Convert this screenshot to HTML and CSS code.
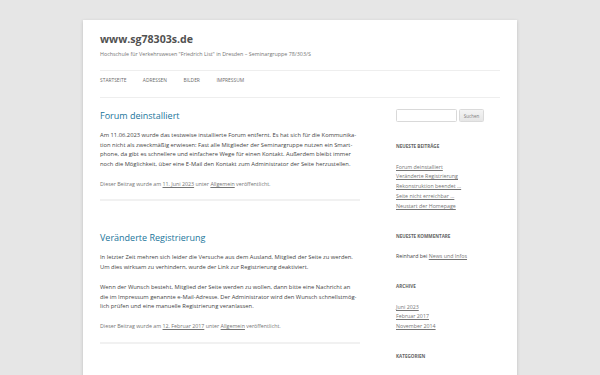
FILE: index.html
```html
<!DOCTYPE html>
<html lang="de">
<head>
<meta charset="utf-8">
<title>www.sg78303s.de</title>
<link rel="stylesheet" href="styles.css">
</head>
<body>
<div class="site">
  <header class="site-header">
    <h1 class="site-title"><a href="#">www.sg78303s.de</a></h1>
    <h2 class="site-description">Hochschule für Verkehrswesen "Friedrich List" in Dresden – Seminargruppe 78/303/S</h2>
    <nav class="main-nav">
      <ul class="nav-menu">
        <li><a href="#">Startseite</a></li>
        <li><a href="#">Adressen</a></li>
        <li><a href="#">Bilder</a></li>
        <li><a href="#">Impressum</a></li>
      </ul>
    </nav>
  </header>
  <div class="main">
    <div class="content">
      <article class="post">
        <h1 class="entry-title"><a href="#">Forum deinstalliert</a></h1>
        <div class="entry-content">
          <p>Am 11.06.2023 wurde das testweise installierte Forum entfernt. Es hat sich für die Kommunika&shy;tion nicht als zweckmäßig erwiesen: Fast alle Mitglieder der Seminargruppe nutzen ein Smart&shy;phone, da gibt es schnellere und einfachere Wege für einen Kontakt. Außerdem bleibt immer noch die Möglichkeit, über eine E-Mail den Kontakt zum Administrator der Seite herzustellen.</p>
        </div>
        <footer class="entry-meta">Dieser Beitrag wurde am <a href="#">11. Juni 2023</a> unter <a href="#">Allgemein</a> veröffentlicht.</footer>
      </article>
      <article class="post">
        <h1 class="entry-title"><a href="#">Veränderte Registrierung</a></h1>
        <div class="entry-content">
          <p>In letzter Zeit mehren sich leider die Versuche aus dem Ausland, Mitglied der Seite zu werden. Um dies wirksam zu verhindern, wurde der Link zur Registrierung deaktiviert.</p>
          <p>Wenn der Wunsch besteht, Mitglied der Seite werden zu wollen, dann bitte eine Nachricht an die im Impressum genannte e-Mail-Adresse. Der Administrator wird den Wunsch schnellstmög&shy;lich prüfen und eine manuelle Registrierung veranlassen.</p>
        </div>
        <footer class="entry-meta">Dieser Beitrag wurde am <a href="#">12. Februar 2017</a> unter <a href="#">Allgemein</a> veröffentlicht.</footer>
      </article>
    </div>
    <aside class="sidebar">
      <div class="widget widget-search">
        <form class="search-form">
          <input class="search-input" type="text" aria-label="Suche">
          <button class="search-button" type="button">Suchen</button>
        </form>
      </div>
      <div class="widget">
        <h3 class="widget-title">Neueste Beiträge</h3>
        <ul class="widget-list">
          <li><a href="#">Forum deinstalliert</a></li>
          <li><a href="#">Veränderte Registrierung</a></li>
          <li><a href="#">Rekonstruktion beendet …</a></li>
          <li><a href="#">Seite nicht erreichbar …</a></li>
          <li><a href="#">Neustart der Homepage</a></li>
        </ul>
      </div>
      <div class="widget">
        <h3 class="widget-title">Neueste Kommentare</h3>
        <ul class="widget-list">
          <li>Reinhard bei <a href="#">News und Infos</a></li>
        </ul>
      </div>
      <div class="widget">
        <h3 class="widget-title">Archive</h3>
        <ul class="widget-list">
          <li><a href="#">Juni 2023</a></li>
          <li><a href="#">Februar 2017</a></li>
          <li><a href="#">November 2014</a></li>
        </ul>
      </div>
      <div class="widget">
        <h3 class="widget-title">Kategorien</h3>
      </div>
    </aside>
  </div>
</div>
</body>
</html>
```
FILE: styles.css
```css
* { box-sizing: border-box; }
html, body { margin: 0; padding: 0; }
body {
  background: #e6e6e6;
  font-family: "Open Sans", "DejaVu Sans", sans-serif;
  color: #444;
}
.site {
  width: 434px;
  margin: 20px auto 0;
  padding: 0 17px 60px;
  background: #fff;
  box-shadow: 0 1px 3px rgba(100, 100, 100, 0.3);
}
.site-header { padding-top: 10px; }
.site-title {
  margin: 0;
  font-size: 10.6px;
  line-height: 19.6px;
  font-weight: 700;
}
.site-title a { color: #515151; text-decoration: none; }
.site-description {
  margin: 0;
  font-size: 5.35px;
  line-height: 9.8px;
  font-weight: 400;
  color: #757575;
}
.main-nav { margin-top: 10.5px; }
.nav-menu {
  list-style: none;
  margin: 0;
  padding: 0 0 7px;
  display: flex;
  gap: 16.5px;
  border-top: 1px solid #eeeeee;
  border-bottom: 1px solid #eeeeee;
}
.nav-menu a {
  display: block;
  font-size: 4.9px;
  line-height: 19px;
  text-transform: uppercase;
  color: #6a6a6a;
  text-decoration: none;
}
.main {
  display: flex;
  justify-content: space-between;
  align-items: flex-start;
  margin-top: 13px;
}
.content { width: 260px; }
.post {
  padding-bottom: 9.8px;
  border-bottom: 2px solid #f1f1f1;
  margin-bottom: 32px;
}
.entry-title {
  margin: 0 0 10.2px;
  font-size: 9px;
  line-height: 9.8px;
  font-weight: 400;
}
.entry-title a { color: #21759b; text-decoration: none; }
.entry-content { max-width: 258px; }
.entry-content p {
  margin: 0 0 9.8px;
  font-size: 5.8px;
  line-height: 9.8px;
  hyphens: manual;
}
.entry-meta {
  font-size: 5.3px;
  line-height: 9.8px;
  color: #757575;
}
.entry-meta a { color: #757575; }
.sidebar { width: 104px; }
.widget { margin-bottom: 19.85px; }
.widget-search { margin-top: -1.5px; }
.search-form { display: flex; gap: 2px; margin: 0; }
.search-input {
  width: 61px;
  height: 13px;
  margin: 0;
  padding: 0;
  border: 1px solid #d9d9d9;
  border-radius: 1.5px;
  background: #fff;
}
.search-button {
  width: 25px;
  height: 13px;
  margin: 0;
  padding: 0;
  border: 1px solid #dadada;
  border-radius: 1.5px;
  background: linear-gradient(#f4f4f4, #e6e6e6);
  font-family: "Open Sans", sans-serif;
  font-size: 4.5px;
  color: #7c7c7c;
}
.widget-title {
  margin: 0 0 10.5px;
  font-size: 4.6px;
  line-height: 9.8px;
  font-weight: 700;
  text-transform: uppercase;
  color: #636363;
}
.widget-list { list-style: none; margin: 0; padding: 0; }
.widget-list li {
  font-size: 5.3px;
  line-height: 9.95px;
  color: #444;
}
.widget-list a { color: #757575; }
```
